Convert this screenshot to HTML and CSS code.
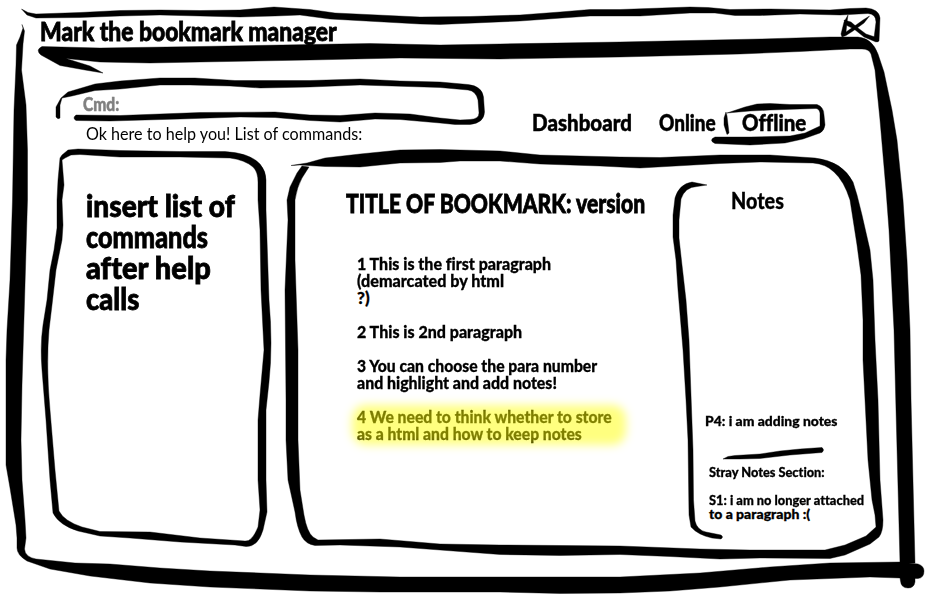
FILE: index.html
```html
<!DOCTYPE html>
<html lang="en">
<head>
<meta charset="utf-8">
<title>Mark the bookmark manager</title>
<link rel="stylesheet" href="styles.css">
</head>
<body>
<div class="app">
  <svg class="ink" viewBox="0 0 930 599" aria-hidden="true">
    <!-- title bar outline -->
    <path d="M21.5 9L28 12.5L36 14L80 12.5L120 10.5L160 10L200 10.5L240 10L274 7L310 9.5L335 13L420 17L470 16.5L520 15L560 12L590 9.5L620 9.5L690 7L708 7.500L730 9.500L770 9L830 10L850 8.500L866 8Q879 9 880 18L879 41L877 42L874 38L876 22Q876 14 868 13.500L840 15L800 14L760 15.500L735 15.500L715 13L690 13L640 16L590 16L520 21L440 24.500L420 24L330 19L300 15L275 16L240 17L160 15L120 16L80 17.500L36 18L27 15Z"/>
    <!-- close button -->
    <path d="M848 15L847 22L846 32L856 25L863 20L869.500 16L864 23L853 31L846 35.500L842 37L841 34L844 22Z"/>
    <path d="M844 20L851 22L858 28L866 34L878 38L878.500 41L876 42L864 37L854 29L846 25Z"/>
    <!-- window frame -->
    <path d="M42 46.500L100 48L200 46.500L310 44.500L370 43.500L440 45L500 44L620 42L760 39L830 37L858 37Q872 38 878 54L884 72L892 110L897 140L901 180L903 200L907 260L910 330L911 399L915 563L900 563L896 410L894 330L889 230L886 190L880 120L875 70L871 54Q869 49 862 49L850 49L800 51.500L740 54L620 57L500 59L400 58L310 60L200 62L150 63L100 62L66 58.500L90 66L103 73L85 70L60 65.500L41 55Q35 50 42 46.500Z"/>
    <path d="M22 24.500L24.500 31L23 44L21.500 70L26 105L27.500 150L27.500 200L25 285L22 385L21 440L22 480L25 520L26 538L24.500 549Q25 557 36 559L75 563L110 564L160 568L210 571L310 575L400 577L620 577L700 573L770 567L830 563L900 562L918 564Q924 566 924 571Q924 578 918 578.500L915 578.500L915 582Q914 588 908 588Q901 588 900.500 581L900 578L870 577L790 580L720 587L670 591L620 593L560 593.500L500 592L380 592L310 591L210 587L150 583L90 576L50 569L27 561Q17 555 17 548L17 538L16 525L10 488L6 465L6 360L7 330L10 280L12.500 200L14 110L16 65L16.500 45L20 37L23 28Z"/>
    <!-- command field -->
    <path d="M61 98L68 92L95 84L120 81L160 78L195 78L235 80.500L310 80.500L360 79L400 81L440 82L468 84.500Q482 86 483.500 97L484.500 112Q484 123 470 124.500L455 124.500L440 123L400 119.500L375 119L340 122L310 120.500L275 117.500L240 117L180 119L110 121L76 120.500Q72 118 76 115L120 115.500L200 112.500L275 112L310 115L340 115.500L375 113L410 114L440 118L460 120L470 119.500Q479 119 479 113L478 100Q476 91 468 90L440 87.500L360 85L310 87L260 88L230 86L190 85L160 85L120 89L95 90.500L72 96L62 98L60 105L60 118Q58 120 56 117L56 107Z"/>
    <!-- commands panel -->
    <path fill-rule="evenodd" d="M60 158L62 155L68 150L78 149L120 150.500L180 151.500L225 151.500Q250 153 260 164Q266 171 266 180L266 210L268 270L269 300Q273 345 269 382L266 410L266 480L267 512L263 530Q258 547 246 546.500L235 545L180 542L130 538L100 536L78 531Q59 525 53 513L50 480L46 420L42 370Q40 345 43 325L47 300L50 270L54 250L57 228L57 200L58 180ZM62 160L65 158L71 155L80 154.500L120 157L180 157L230 158Q245 160 253 167Q258 172 258 182L258 200L260 230L261 290L264 350L260 395L258 420L258 480L260 510L258 527Q252 542 245 541L200 538L150 532L100 531.500L82 527Q64 521 59 511L55 470L50 410Q46 365 49 330L52 305L56 270L62 240L63 225L62 200L64 185Z"/>
    <!-- bookmark panel -->
    <path d="M291 165.500L307 163L325 158L360 154L400 150L440 149.500L500 151L540 155L620 157L660 157.500L720 155L770 155L815 158Q842 161 853 182L857 195L862 215L870 250L873 280L875 340L878 400L880 480L883 520Q883 532 879 537L870 544L845 555L830 558.500L760 558L720 559L670 556.500L620 554.500L560 555.500L500 554.500L460 551.500L400 547L340 545L315 545.500Q306 544 302 537Q297 528 295 512L288 480L286 440L286 400L285 290L288 220L287 200L290 187L297 173L302 166L309 167L302 178Q297 187 295 200L295 260L298 350L298 440L300 490L304 515Q307 532 313 537L318 540L380 539L440 544L500 545L620 546L700 549L750 550L825 550L845 545L866 536L876 527L875 515L872 500L868 460L865 400L863 360L863 320L861 275L857 245L850 200Q844 181 834 172Q826 164 813 163L760 162L720 163.500L640 168L600 166L540 164L500 161L460 161L440 162.500L400 163L360 167L325 166.500L300 165Z"/>
    <!-- notes bracket -->
    <path d="M707 185L697 186.500Q685 187 681 199L679 220L679 238L682 265L686 300L689 340L691 395L693 450L693.500 500L695 521Q697 530 706 532L721 535Q724 537 721 539L712 538Q698 535 691 527L689 515L688 440L686 400L683 350L678 290L676 260L673 237L673 215L675 198Q679 184 692 182Z"/>
    <path d="M723 459L728 456.500L735 455.500L760 454L780 451L800 449L822 447.500Q825 450 822 452.500L790 455L760 458.500L740 459Z"/>
    <!-- active tab outline -->
    <path d="M727 113L745 107L757 104L770 103.500L790 104.500L817 104.500Q824 107 824 115L825 125Q824 131 820 133L803 139L785 143L750 145L715 143.500Q708 140 715 137L750 137L790 136L805 133L820 126L820 113Q819 108 815 108.500L800 109L770 110L750 111ZM726 112L727 116L729 133L727 134.500L724 125L724 118Z"/>
  </svg>

  <header class="titlebar"><h1 class="fit" data-w="297">Mark the bookmark manager</h1></header>

  <section class="toolbar">
    <div class="command">
      <div class="prompt"><span class="fit" data-w="36">Cmd:</span></div>
      <div class="reply"><span class="fit" data-w="276">Ok here to help you! List of commands:</span></div>
    </div>
    <nav class="tabs">
      <span class="tab"><span class="fit" data-w="100">Dashboard</span></span>
      <span class="tab tab-online"><span class="fit" data-w="57">Online</span></span>
      <span class="tab tab-offline"><span class="fit" data-w="64">Offline</span></span>
    </nav>
  </section>

  <main class="workspace">
    <aside class="commands">
      <p><span class="fit" data-w="149">insert list of</span><span class="fit" data-w="122">commands</span><span class="fit" data-w="125">after help</span><span class="fit" data-w="53">calls</span></p>
    </aside>
    <article class="bookmark">
      <h2><span class="fit" data-w="299">TITLE OF BOOKMARK: version</span></h2>
      <div class="paragraphs">
        <p><span class="fit" data-w="194">1 This is the first paragraph</span><span class="fit" data-w="147">(demarcated by html</span><span class="fit" data-w="13">?)</span></p>
        <p><span class="fit" data-w="165">2 This is 2nd paragraph</span></p>
        <p><span class="fit" data-w="240">3 You can choose the para number</span><span class="fit" data-w="200">and highlight and add notes!</span></p>
        <p class="marked"><span class="fit" data-w="255">4 We need to think whether to store</span><span class="fit" data-w="225">as a html and how to keep notes</span></p>
      </div>
    </article>
    <aside class="notes">
      <h3><span class="fit" data-w="53">Notes</span></h3>
      <p class="note"><span class="fit" data-w="132">P4: i am adding notes</span></p>
      <div class="stray">
        <p><span class="fit" data-w="116">Stray Notes Section:</span></p>
        <p><span class="fit" data-w="155">S1: i am no longer attached</span><span class="fit" data-w="101">to a paragraph :(</span></p>
      </div>
    </aside>
  </main>
</div>
<script src="fit.js"></script>
</body>
</html>
```
FILE: styles.css
```css
* { box-sizing: border-box; margin: 0; padding: 0; }
body { background: #fff; color: #000; font-family: Lato, "Open Sans", sans-serif; font-weight: 900; font-variant-ligatures: none; -webkit-text-stroke: 0.5px currentColor; overflow: hidden; }
.app { position: relative; width: 930px; height: 599px; display: flex; flex-direction: column; }
.ink { position: absolute; inset: 0; width: 930px; height: 599px; fill: #000; stroke: #000; stroke-width: 0.4; stroke-linejoin: round; }
.fit { display: block; width: max-content; white-space: nowrap; transform-origin: 0 50%; }
h1, h2, h3 { font-weight: 900; }

.titlebar { height: 78px; padding: 16px 0 0 40px; }
.titlebar h1 { font-size: 26px; line-height: 30px; -webkit-text-stroke-width: 0.8px; }

.toolbar { height: 71px; display: grid; grid-template-columns: 532px 1fr; }
.command { padding: 15px 0 0 83px; }
.prompt { font-size: 19px; line-height: 22px; color: #808080; }
.reply { margin: 9px 0 0 3px; font-size: 17px; line-height: 20px; font-weight: 400; -webkit-text-stroke-width: 0; }
.tabs { display: flex; padding-top: 30px; font-size: 23px; line-height: 28px; }
.tab { width: 127px; }
.tab-online { width: 83px; }
.tab-offline { width: 64px; }

.workspace { height: 450px; display: grid; grid-template-columns: 272px 402px 1fr; }
.commands { padding: 41px 0 0 86px; font-size: 30px; line-height: 31px; -webkit-text-stroke-width: 0.8px; }
.bookmark { padding: 39px 0 0 74px; }
.bookmark h2 { font-size: 26px; line-height: 30px; -webkit-text-stroke-width: 0.8px; }
.paragraphs { display: flex; flex-direction: column; gap: 17px; margin: 37px 0 0 11px; font-size: 17px; line-height: 17px; -webkit-text-stroke-width: 0.3px; }
.marked { position: relative; }
.marked::after { content: ""; position: absolute; left: -5px; top: -3px; width: 274px; height: 40px; background: rgba(255, 255, 0, 0.5); border-radius: 14px; filter: blur(5px); }
.notes { padding: 39px 0 0 31px; font-size: 14px; line-height: 14px; -webkit-text-stroke-width: 0.3px; }
.notes h3 { margin-left: 26px; font-size: 22px; line-height: 26px; }
.note { margin-top: 200px; }
.stray { display: flex; flex-direction: column; gap: 14px; margin: 37px 0 0 4px; }
```
FILE: fit.js
```js
// Squeeze each hand-lettered line to its drawn width.
document.querySelectorAll(".fit").forEach(function (line) {
  var ratio = Number(line.dataset.w) / line.offsetWidth;
  line.style.transform = "scaleX(" + ratio.toFixed(4) + ")";
});
```
